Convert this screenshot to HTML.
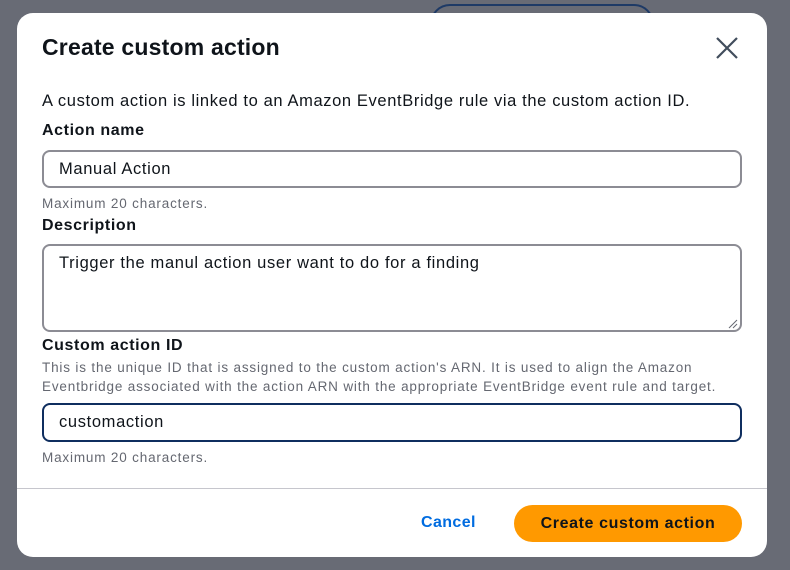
<!DOCTYPE html>
<html><head><style>
body{margin:0;width:790px;height:570px;background:#686b75;font-family:"Liberation Sans",sans-serif;position:relative;overflow:hidden;color:#0f141a}
.bgbtn{position:absolute;left:430px;top:4px;width:224px;height:40px;border:2px solid #1e3a66;border-radius:20px;box-sizing:border-box}
.modal{position:absolute;left:17px;top:13px;width:750px;height:544px;background:#fff;border-radius:16px}
.a{position:absolute;white-space:nowrap}
.t{left:25px;top:21px;font-size:23px;font-weight:bold;color:#0f141a;letter-spacing:0.2px}
.x{left:698px;top:23px}
.p{font-size:16.5px;color:#0f141a;letter-spacing:0.62px}
.l{font-size:16px;font-weight:bold;letter-spacing:0.6px}
.h{font-size:13.5px;color:#656871;letter-spacing:0.83px}
.in{position:absolute;left:25px;width:700px;border:2px solid #8c8c94;border-radius:8px;box-sizing:border-box;font-size:16.5px;letter-spacing:0.65px;padding:8px 15px;color:#0f141a}
.div{position:absolute;left:0;right:0;top:475px;border-top:1px solid #c6c6cd}
.btn{position:absolute;left:497px;top:492px;width:228px;height:37px;background:#ff9900;border-radius:19px;font-weight:bold;font-size:16px;letter-spacing:0.6px;text-align:center;line-height:37px;color:#0f141a}
.c{left:404px;top:501px;color:#006ce0;font-weight:bold;font-size:16px;letter-spacing:0.4px}
</style></head><body>
<div class="bgbtn"></div>
<div class="modal">
<div class="a t">Create custom action</div>
<svg class="a x" width="24" height="24" viewBox="0 0 24 24"><path d="M2 2L22 22M22 2L2 22" stroke="#414d5c" stroke-width="2.2" fill="none"/></svg>
<div class="a p" style="left:25px;top:79px">A custom action is linked to an Amazon EventBridge rule via the custom action ID.</div>
<div class="a l" style="left:25px;top:109px">Action name</div>
<div class="in" style="top:137px;height:38px">Manual Action</div>
<div class="a h" style="left:25px;top:183px">Maximum 20 characters.</div>
<div class="a l" style="left:25px;top:204px">Description</div>
<div class="in" style="top:231px;height:88px">Trigger the manul action user want to do for a finding</div>
<svg class="a" style="left:711px;top:306px" width="10" height="10"><path d="M9 1L1 9M9 5L5 9" stroke="#656871" stroke-width="1"/></svg>
<div class="a l" style="left:25px;top:324px">Custom action ID</div>
<div class="a h" style="left:25px;top:347px">This is the unique ID that is assigned to the custom action's ARN. It is used to align the Amazon</div>
<div class="a h" style="left:25px;top:366px">Eventbridge associated with the action ARN with the appropriate EventBridge event rule and target.</div>
<div class="in" style="top:390px;height:39px;border-color:#0f2e5f">customaction</div>
<div class="a h" style="left:25px;top:437px">Maximum 20 characters.</div>
<div class="div"></div>
<div class="a c">Cancel</div>
<div class="btn">Create custom action</div>
</div>
</body></html>
